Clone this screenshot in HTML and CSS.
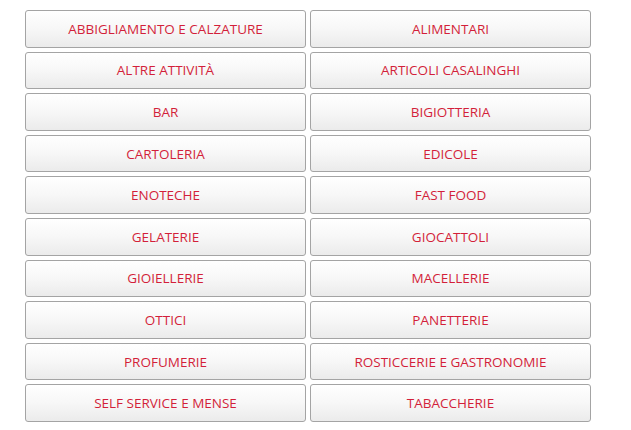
FILE: index.html
```html
<!DOCTYPE html>
<html lang="it">
<head>
<meta charset="utf-8">
<link rel="stylesheet" href="styles.css">
</head>
<body>
<div class="grid">
  <a class="btn">ABBIGLIAMENTO E CALZATURE</a>
  <a class="btn">ALIMENTARI</a>
  <a class="btn">ALTRE ATTIVITÀ</a>
  <a class="btn">ARTICOLI CASALINGHI</a>
  <a class="btn">BAR</a>
  <a class="btn">BIGIOTTERIA</a>
  <a class="btn">CARTOLERIA</a>
  <a class="btn">EDICOLE</a>
  <a class="btn">ENOTECHE</a>
  <a class="btn">FAST FOOD</a>
  <a class="btn">GELATERIE</a>
  <a class="btn">GIOCATTOLI</a>
  <a class="btn">GIOIELLERIE</a>
  <a class="btn">MACELLERIE</a>
  <a class="btn">OTTICI</a>
  <a class="btn">PANETTERIE</a>
  <a class="btn">PROFUMERIE</a>
  <a class="btn">ROSTICCERIE E GASTRONOMIE</a>
  <a class="btn">SELF SERVICE E MENSE</a>
  <a class="btn">TABACCHERIE</a>
</div>
</body>
</html>
```
FILE: styles.css
```css
html, body {
  margin: 0;
  padding: 0;
  background: #fff;
}
body {
  font-family: "Open Sans", "Liberation Sans", sans-serif;
}
.grid {
  display: grid;
  grid-template-columns: 281px 281px;
  grid-auto-rows: 37.6px;
  column-gap: 4px;
  row-gap: 4px;
  padding: 10px 0 0 25px;
}
.btn {
  display: flex;
  align-items: center;
  justify-content: center;
  box-sizing: border-box;
  border: 1px solid #a4a4a4;
  border-radius: 3px;
  background: linear-gradient(to bottom, #ffffff 0%, #f7f7f7 50%, #ebebeb 100%);
  color: #d31f3a;
  font-size: 13.5px;
  text-decoration: none;
  cursor: pointer;
}
```
